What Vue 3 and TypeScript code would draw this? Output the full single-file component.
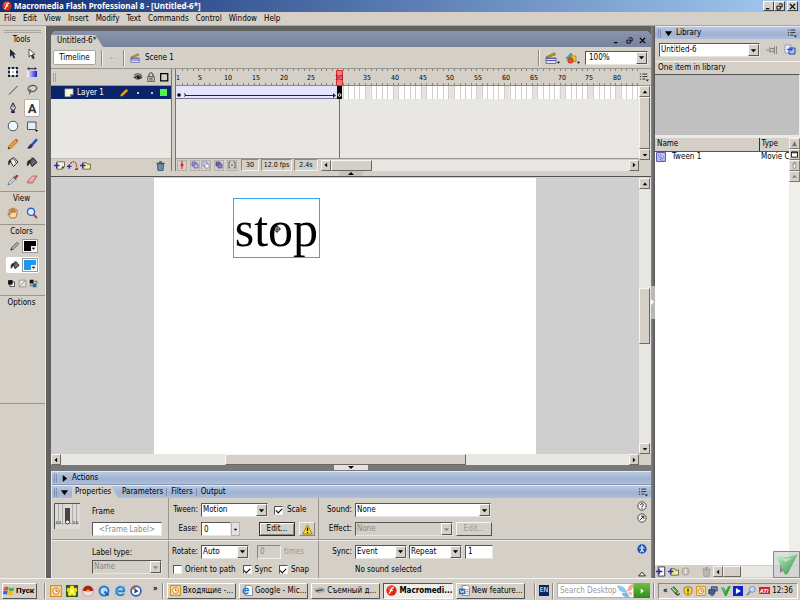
<script setup lang="ts">
import { ref } from 'vue'

const icons: Record<string, string> = {
  flash: '<circle cx="6" cy="6" r="5.6" fill="#e02810"/><circle cx="5" cy="4" r="3" fill="#f46a4a" opacity=".6"/><path d="M8.6 2.6C6 2.6 5.6 4.6 5 6.4S3.8 9.2 3 9.4M4.8 6.2h2.6" stroke="#fff" stroke-width="1.4" fill="none"/>',
  arrow: '<path d="M3 1v8l2-2 1.6 3.6 1.6-.8L6.6 6.4H9z" fill="#1c2c40"/>',
  subarrow: '<path d="M3 1v8l2-2 1.6 3.6 1.6-.8L6.6 6.4H9z" fill="#fff" stroke="#333" stroke-width=".8"/><path d="M6 7l1.8 3.6" stroke="#222" stroke-width="1.4"/>',
  transform: '<path d="M2 2h8v8H2z" fill="#fff" stroke="#345" stroke-width=".8"/><path d="M1 1h2v2H1zM5 1h2v2H5zM9 1h2v2H9zM1 5h2v2H1zM9 5h2v2H9zM1 9h2v2H1zM5 9h2v2H5zM9 9h2v2H9zM5.4 5.4h1.2v1.2H5.4z" fill="#123"/>',
  gradient: '<defs><linearGradient id="gr"><stop offset="0" stop-color="#fff"/><stop offset="1" stop-color="#1818d8"/></linearGradient></defs><path d="M1 5h10v6H1z" fill="url(#gr)"/><path d="M1 2.600L3.400.8v1.200h5.200V.8L11 2.600 8.600 4.400V3.200H3.400v1.200z" fill="#446"/>',
  line: '<path d="M2 10.500L10.500 2" stroke="#444" stroke-width="1"/>',
  lasso: '<path d="M3.400 7.200C1 6 1.400 2.400 5.400 1.600s6.600 1.600 4.800 4-5 2.600-6.400 1.400c-1-.9.6-1.800 1-.8.300 1-1.400 2-1.400 4" fill="none" stroke="#555" stroke-width="1.100"/>',
  pen: '<path d="M6 .8L3.600 5.600 4.800 8h2.400l1.200-2.400z" fill="#eef" stroke="#223" stroke-width="1"/><path d="M6 2v4" stroke="#223" stroke-width=".7"/><path d="M4.200 8.500h3.600V11H4.200z" fill="#224"/>',
  oval: '<circle cx="6" cy="6" r="4.800" fill="#eef8fa" stroke="#456" stroke-width="1"/>',
  rect: '<path d="M1.500 2h8.500v7.500H1.500z" fill="#e2f0f6" stroke="#456"/><path d="M9 10h3l-1.500 2z" fill="#000"/>',
  pencil: '<path d="M1 11l1-3.200L8.600 1.200l2.400 2.200L4 10z" fill="#f2a024" stroke="#84500a" stroke-width=".6"/><path d="M8.200 1.600l1-.8 2 2-.9.900z" fill="#d84830"/><path d="M1 11l.6-2L3 10.400z" fill="#222"/>',
  brush: '<path d="M5.200 6.200L10 .8l1.500 1.200-4.600 5.400z" fill="#2a54d4" stroke="#123488" stroke-width=".5"/><path d="M5.200 6C2.800 6 3.400 9 .8 10.200c3 1.200 6-.2 6-2.600z" fill="#335"/>',
  ink: '<path d="M2.500 4L7 1.500 11 6 6.500 10.500z" fill="#eee" stroke="#333"/><path d="M2.500 4C.8 5 .8 8 2 9.500 3 7 3 6 5 5z" fill="#222"/><path d="M5 2.800c2 .2 4 2 4 4.500" fill="none" stroke="#333" stroke-width=".8"/>',
  bucket: '<path d="M3.500 4.500L7.500 2 11 6.500 6 10.500z" fill="#667" stroke="#222"/><path d="M4 4C1.500 4.500.8 7 1.400 10 3 8.800 3 7 4.800 6zM6 1v4" fill="#222" stroke="#333" stroke-width=".8"/>',
  dropper: '<path d="M1 11l.8-2.600L6.600 3.600l1.800 1.800L3.400 10z" fill="#cfe4f2" stroke="#557" stroke-width=".7"/><path d="M6 3l3 3 .8-.8-.8-.8C11 3.400 12 2 10.800 1S8.400 1.400 7.600 3l-.8-.8z" fill="#b83440"/>',
  eraser: '<path d="M1 8l5.500-6h4.500L6.500 9H1.500z" fill="#f2b4b4" stroke="#955" stroke-width=".8"/><path d="M1.500 7.500H6L10.500 2" fill="none" stroke="#c77" stroke-width=".6"/>',
  hand: '<path d="M3.400 11L1 7.200c-.4-1 .8-1.200 1.400-.4L3.200 8 2 3.200c0-1 1.200-1 1.400-.2L4.400 6 4.200 1.800c0-1.100 1.300-1.100 1.400 0L6 5.600l.6-4c.2-1 1.400-.8 1.400.2l-.4 4L9 3.200c.5-.9 1.500-.4 1.300.4C9.600 6.400 10.400 8.500 8.400 11z" fill="#fbd8a0" stroke="#a05a14" stroke-width=".8"/>',
  zoom: '<path d="M7.500 7.500l3.500 3.500" stroke="#a44" stroke-width="2"/><circle cx="5" cy="4.800" r="3.600" fill="#d8f0ff" stroke="#2a5cd0" stroke-width="1.400"/>',
  bw: '<path d="M4 4h6v6H4z" fill="#fff" stroke="#222"/><path d="M1.500 1.500h6v6h-6z" fill="#111"/>',
  nocolor: '<path d="M1.500 1.500h9v9h-9z" fill="#e4e1dc" stroke="#888"/><path d="M2 10l8-8" stroke="#888"/>',
  swap: '<path d="M1 1h5v5H1z" fill="#111"/><path d="M5 6h5v5H5z" fill="#246c8c"/><path d="M7 3h3.500v3M5 9H1.500V7" fill="none" stroke="#246c8c" stroke-width="1.200"/>',
  strokepen: '<path d="M1 11l1-3.400L8.500 1.400l2 2L4 10z" fill="#aaa" stroke="#444" stroke-width=".8"/><path d="M1 11l.8-2.400 1.600 1.600z" fill="#222"/>',
  clap: '<path d="M1 6h10v5.500H1z" fill="#dcdcfa" stroke="#5858a8" stroke-width=".8"/><path d="M1 6.400h10M1 8.500h10" stroke="#5858a8"/><path d="M.8 5L9.500.8l1 2L2 5.800z" fill="#b8a418" stroke="#665a08" stroke-width=".6"/>',
  shapes: '<path d="M1 6.500L6 1l2 5z" fill="#38b8a0" stroke="#176" stroke-width=".6"/><path d="M6 4h5v5.500H6z" fill="#f0c824" stroke="#862" stroke-width=".6"/><circle cx="5.500" cy="8.500" r="2.800" fill="#e4502c" stroke="#922" stroke-width=".5"/>',
  back: '<path d="M1 6l4-3v2h5.500v2H5v2z" fill="#bcb8b0" stroke="#eee" stroke-width=".4"/>',
  eye: '<path d="M.6 6.500C3 3 8 2 11.400 6.500 8 10 3.500 9.500.6 6.500z" fill="#444"/><path d="M1 4C4 1.500 8 1.600 11 4.500" stroke="#222" fill="none"/><circle cx="6" cy="6.600" r="1.600" fill="#111"/><circle cx="4" cy="7" r=".8" fill="#bbb"/>',
  lock: '<path d="M3.500 6V3.500C3.500.2 8.500.2 8.500 3.500V6" fill="none" stroke="#333" stroke-width="1.200"/><path d="M2 5.500h8v6H2z" fill="#c8ccb0" stroke="#333" stroke-width=".8"/><path d="M4 7.500h4M4 9.500h4" stroke="#445"/>',
  outline: '<path d="M2 2h8.500v8.500H2z" fill="none" stroke="#000" stroke-width="1.500"/>',
  layer: '<path d="M1 1h10v6.500L8 10.500H1z" fill="#f8f8dc" stroke="#776" stroke-width=".7"/><path d="M11 7.500H7.500v3z" fill="#443"/>',
  addlayer: '<path d="M3 2h8.500v5L9 10H3z" fill="#f4f4d8" stroke="#443" stroke-width=".8"/><path d="M0 6h6M3 3v6" stroke="#2828b8" stroke-width="1.500"/><path d="M11.500 7H8.500v3z" fill="#333"/>',
  guide: '<path d="M4 4C5 1 9 1 10.500 5v4" fill="none" stroke="#e03030" stroke-width="1.500" stroke-dasharray="2 1"/><path d="M0 7h5M2.500 4.500v5" stroke="#2828b8" stroke-width="1.500"/><path d="M9 9h3v2H9z" fill="#c22"/>',
  folder: '<path d="M3 3h4l1 1.500h3.500V10H3z" fill="#f4ec9c" stroke="#443" stroke-width=".8"/><path d="M0 6h6M3 3v6" stroke="#2828b8" stroke-width="1.500"/>',
  trash: '<path d="M2.500 4h7L8.800 11.500H3.200z" fill="#6c88b4" stroke="#345" stroke-width=".8"/><path d="M1.500 3.500h9M4.500 2h3" stroke="#345" stroke-width="1.200"/>',
  trashoff: '<path d="M2.500 4h7L8.800 11.500H3.200z" fill="#bbb8b0" stroke="#999" stroke-width=".8"/><path d="M1.500 3.500h9M4.500 2h3" stroke="#999" stroke-width="1.200"/>',
  center: '<path d="M6 0v12" stroke="#e02020" stroke-width="1.600"/><path d="M4 6h4" stroke="#e02020" stroke-width="4"/>',
  onion: '<path d="M1.500 1.500h6v6h-6z" fill="#9898d8" stroke="#5050a0"/><path d="M4.500 4.500h6v6h-6z" fill="#b8b8ec" stroke="#5050a0"/>',
  onion2: '<path d="M1.500 1.500h6v6h-6z" fill="#e4e4fc" stroke="#6868b0"/><path d="M4.500 4.500h6v6h-6z" fill="#fff" stroke="#6868b0"/>',
  multi: '<path d="M1.500 1.500h6v6h-6z" fill="#6868b8" stroke="#404090"/><path d="M4.500 4.500h6v6h-6z" fill="#8888d0" stroke="#404090"/>',
  markers: '<path d="M4 1.500H1.500v9H4M8 1.500h2.500v9H8" fill="none" stroke="#333"/><path d="M5 5h2v2H5z" fill="#558"/>',
  menu: '<path d="M1 2.500h1.500M1 5.500h1.500M1 8.500h1.500M4 2.500h6M4 5.500h6M4 8.500h3.500" stroke="#333" stroke-width="1.200"/><path d="M8 9h4l-2 2.500z" fill="#222"/>',
  pin: '<path d="M0 6h4M4 3v6M4 4.500h4v3H4M8.500 2v8M10.500 2v8" fill="none" stroke="#888" stroke-width="1"/>',
  newlib: '<path d="M1 1h6v8H1z" fill="#e8eefc" stroke="#7890c8" stroke-width=".8"/><path d="M5 4h6v6H5z" fill="#a8c0f4" stroke="#2848b0"/><path d="M3 5.500h5M6.500 4l2 1.500-2 1.500" stroke="#2050d0" fill="none"/>',
  clip: '<path d="M.7.700h10.600v10.600H.7z" fill="#c8c8fa" stroke="#5050b0" stroke-width="1.200"/><path d="M3 3h2v2H3zM6.500 4.500h2.500V7H6.500zM3.500 6.500h2v2.500h-2zM6 8h2v2H6z" fill="#fff" stroke="#5050b0" stroke-width=".6"/>',
  help: '<circle cx="6" cy="6" r="5" fill="#f4f2ee" stroke="#333"/><path d="M4.300 4.800C4.300 2.600 7.800 2.800 7.600 4.800 7.400 5.800 6 5.800 6 7.200M6 8.200v1.200" fill="none" stroke="#222" stroke-width="1.200"/>',
  out: '<circle cx="6" cy="6" r="5" fill="#f4f2ee" stroke="#333"/><path d="M3.800 8.200L8 4M5 3.800h3.200V7" fill="none" stroke="#222" stroke-width="1.200"/>',
  access: '<circle cx="6" cy="6" r="5.600" fill="#1c50b8"/><circle cx="6" cy="3" r="1.100" fill="#fff"/><path d="M2.800 4.800h6.400M6 4.800v2.500M6 6.500L4 9.800M6 6.500l2 3.300" stroke="#fff" stroke-width="1.300"/>',
  warn: '<path d="M6 1l5.300 10H.7z" fill="#fcd818" stroke="#8a6400" stroke-width=".8"/><path d="M6 4.200v3.400M6 8.600V10" stroke="#111" stroke-width="1.300"/>',
  newsym: '<path d="M2.500 1h7v10h-7z" fill="#fff" stroke="#334"/><path d="M0 6h7M3.500 3v6" stroke="#2828b8" stroke-width="1.500"/>',
  info: '<circle cx="6" cy="6" r="4" fill="#c4c1ba" stroke="#a4a19a"/><path d="M6 3.500v5" stroke="#eee" stroke-width="1.500"/>',
  windows: '<path d="M1 2.500Q3.500.8 5.600 2.200L4.800 5.600Q3 4.400.4 5.600z" fill="#e4542c"/><path d="M6.200 2.400Q8.500 3.800 11.200 2.600l-.8 3.400Q8 7 5.600 5.800z" fill="#58b030"/><path d="M.3 6.200Q3 5 4.700 6.200L4 9.600Q2 8.400 0 9.400z" fill="#3468d8"/><path d="M5.400 6.400Q8 7.600 10.200 6.600L9.400 10Q7 11 4.700 9.800z" fill="#f4bc20"/>',
  outlook: '<path d="M.7.700h10.600v10.600H.7z" fill="#fce4a8" stroke="#d88c20" stroke-width="1.200"/><circle cx="6" cy="6" r="3.300" fill="#fff8e4" stroke="#c87818"/><path d="M6 4v2.200h1.800" stroke="#a45c10" fill="none"/>',
  icq: '<path d="M0 0h12v12H0z" fill="#2c5c24"/><circle cx="6" cy="2.800" r="2.200" fill="#f8e820"/><circle cx="2.900" cy="5" r="2.200" fill="#f4d818"/><circle cx="9.100" cy="5" r="2.200" fill="#f4d818"/><circle cx="4" cy="8.800" r="2.200" fill="#f8e820"/><circle cx="8" cy="8.800" r="2.200" fill="#f8e820"/><circle cx="6" cy="6" r="2" fill="#fff8a0"/>',
  redball: '<circle cx="6" cy="6" r="5.400" fill="#f2dcd4" stroke="#a88" stroke-width=".6"/><path d="M.8 6a5.200 5.200 0 0110.400 0z" fill="#a82020"/><path d="M3 7h6L6 4z" fill="#e8b820"/>',
  qt: '<circle cx="6" cy="6" r="4.500" fill="#b8dcf8" stroke="#2c78c8" stroke-width="2"/><path d="M6.500 6.500l4 4" stroke="#1c58a8" stroke-width="1.800"/>',
  ie: '<path d="M10 8.500A4.300 4.300 0 116 1.700c2.800 0 4.400 2 4.200 4.600H3.500" fill="none" stroke="#2484d8" stroke-width="2"/><path d="M1 10.500C-.5 8 7 1 11 1.500" fill="none" stroke="#68b4ec"/>',
  wmp: '<circle cx="6" cy="6" r="4.900" fill="#fff" stroke="#2858c0" stroke-width="1.600"/><path d="M6 1.100A4.900 4.900 0 011.500 4" stroke="#d86820" stroke-width="1.600" fill="none"/><path d="M4.500 3.500L8.500 6l-4 2.500z" fill="#1c3c94"/>',
  doc: '<path d="M3.500.5h6l2 2v9h-8z" fill="#fff" stroke="#557" stroke-width=".7"/><path d="M0 4h7v6H0z" fill="#2c64c4"/><path d="M1.500 5.500l1 3 1-2 1 2 1-3" stroke="#fff" fill="none" stroke-width=".8"/><path d="M8 5h2.500M8 7h2.500M8 9h2.500" stroke="#88a"/>',
  iedoc: '<path d="M3.500.5h6l2 2v9h-8z" fill="#fff" stroke="#557" stroke-width=".7"/><path d="M7 8A3 3 0 114.500 3.500C6.500 3.500 7.200 5 7 6.200H2.500" fill="none" stroke="#2474d0" stroke-width="1.500"/>',
  disk: '<path d="M0 4.500L7 3l5 1.500-1 2.500-7 1.500z" fill="#bbb" stroke="#888" stroke-width=".5"/><path d="M2 6.500l8-1.500" stroke="#444" stroke-width="1.500"/>',
  usb: '<path d="M1 3l4-2 5 6-3 3z" fill="#58a848" stroke="#245c1c" stroke-width=".8"/><path d="M6 8l3 3 3-2" stroke="#444" fill="none" stroke-width="1.500"/><path d="M2 2l5 5" stroke="#e8f4e0"/>',
  shield: '<path d="M6 .6l4.800 1.400v4C10.800 9 8 11 6 11.600 4 11 1.200 9 1.200 6V2z" fill="#fcd428" stroke="#7a6a38" stroke-width=".9"/><path d="M6 3v4M6 8.200v1.500" stroke="#222" stroke-width="1.500"/>',
  net: '<path d="M4 1h7v5H4z" fill="#6888d0" stroke="#334"/><path d="M1 4.500h7v5H1z" fill="#4860a8" stroke="#334"/><path d="M3 11h4" stroke="#445" stroke-width="1.500"/>',
  vee: '<path d="M0 1.500l3.500.5L6 6 8.500.5 12 0 6.500 12H5z" fill="#28a03c"/><path d="M2 2.500L5.500 8" stroke="#80dc80"/>',
  play: '<path d="M0 0h12v12H0z" fill="#0c24d0"/><path d="M3.500 2.500L9.500 6l-6 3.500z" fill="#fff"/>',
  search: '<circle cx="7.500" cy="4" r="3.500" fill="#c0dcf8" stroke="#6888c0"/><path d="M5 6.800L1 11" stroke="#7888a8" stroke-width="2"/>',
  butterfly: '<path d="M0 2c3-.5 6 1 7.500 4.500C5 8 1 6 0 2z" fill="#8cc8ec"/><path d="M7.500 6.500C8 3 10 .5 12 1c.5 3-1 5-4.500 5.500z" fill="#f8a888"/><path d="M3.500 7.500L7.500 7l2 3.500C7 11.500 4 10 3.500 7.500z" fill="#78b8e4"/><path d="M8 7l3.500-.2-1 3.200z" fill="#f4b49c"/>',
}

interface Tool { id: string; label: string }
const tools: Tool[] = [
  { id: 'arrow', label: 'Selection' }, { id: 'subarrow', label: 'Subselection' },
  { id: 'transform', label: 'Free transform' }, { id: 'gradient', label: 'Gradient transform' },
  { id: 'line', label: 'Line' }, { id: 'lasso', label: 'Lasso' },
  { id: 'pen', label: 'Pen' }, { id: 'text', label: 'Text' },
  { id: 'oval', label: 'Oval' }, { id: 'rect', label: 'Rectangle' },
  { id: 'pencil', label: 'Pencil' }, { id: 'brush', label: 'Brush' },
  { id: 'ink', label: 'Ink bottle' }, { id: 'bucket', label: 'Paint bucket' },
  { id: 'dropper', label: 'Eyedropper' }, { id: 'eraser', label: 'Eraser' },
]
const activeTool = ref('text')
const menus = ['File', 'Edit', 'View', 'Insert', 'Modify', 'Text', 'Commands', 'Control', 'Window', 'Help']

const FRAME = 5.56
const ROW_FRAMES = 120
const lastKey = 30
const fx = (n: number) => (n - 1) * FRAME
const keyX = Math.floor(fx(lastKey))
const labels = [1, ...Array.from({ length: 16 }, (_, i) => (i + 1) * 5)]

const onionButtons = ['center', 'onion', 'onion2', 'multi', 'markers']
const quick = ['outlook', 'icq', 'redball', 'qt', 'ie', 'wmp']
const tasks = [
  { icon: 'outlook', text: 'Входящие -...', active: false },
  { icon: 'iedoc', text: 'Google - Mic...', active: false },
  { icon: 'disk', text: 'Съемный д...', active: false },
  { icon: 'flash', text: 'Macromedi...', active: true },
  { icon: 'doc', text: 'New feature...', active: false },
]
const tray = ['usb', 'shield', 'outlook', 'net', 'vee', 'play', 'search']

const scale = ref(true)
const orient = ref(false)
const syncOn = ref(true)
const snap = ref(true)
const ease = ref('0')
const loops = ref('1')
</script>

<template>
  <div class="screen">
    <header class="titlebar">
      <svg class="ic" viewBox="0 0 12 12" v-html="icons.flash" />
      <h1>Macromedia Flash Professional 8 - [Untitled-6*]</h1>
      <div class="winbtns">
        <button aria-label="Minimize"><svg viewBox="0 0 8 8"><path d="M1 6.500h4" stroke="#000" stroke-width="1.500" /></svg></button>
        <button aria-label="Restore"><svg viewBox="0 0 8 8"><path d="M3 1h4v3.500H5M1 3.500h4V7H1z" fill="none" stroke="#000" /></svg></button>
        <button class="gapped" aria-label="Close"><svg viewBox="0 0 8 8"><path d="M1 1l6 6M7 1L1 7" stroke="#000" stroke-width="1.500" /></svg></button>
      </div>
    </header>
    <nav class="menubar"><button v-for="m in menus" :key="m">{{ m }}</button></nav>

    <main class="work">
      <aside class="tools">
        <div class="grip" />
        <h2>Tools</h2>
        <div class="toolgrid">
          <button v-for="t in tools" :key="t.id" :aria-label="t.label" :class="{ on: activeTool === t.id }" @click="activeTool = t.id">
            <b v-if="t.id === 'text'">A</b>
            <svg v-else class="ic12" viewBox="0 0 12 12" v-html="icons[t.id]" />
          </button>
        </div>
        <h2 class="ruled">View</h2>
        <div class="toolgrid">
          <button aria-label="Hand"><svg class="ic12" viewBox="0 0 12 12" v-html="icons.hand" /></button>
          <button aria-label="Zoom"><svg class="ic12" viewBox="0 0 12 12" v-html="icons.zoom" /></button>
        </div>
        <h2 class="ruled">Colors</h2>
        <div class="colorrow">
          <svg class="ic" viewBox="0 0 12 12" v-html="icons.strokepen" />
          <button class="swatch black" aria-label="Stroke color"><svg viewBox="0 0 6 6"><path d="M0 0h6v6H0z" fill="#eee" /><path d="M1 2h4L3 4.500z" /></svg></button>
        </div>
        <div class="colorrow lit">
          <svg class="ic" viewBox="0 0 12 12" v-html="icons.bucket" />
          <button class="swatch blue" aria-label="Fill color"><svg viewBox="0 0 6 6"><path d="M0 0h6v6H0z" fill="#eee" /><path d="M1 2h4L3 4.500z" /></svg></button>
        </div>
        <div class="mini">
          <button aria-label="Black and white"><svg viewBox="0 0 12 12" v-html="icons.bw" /></button>
          <button aria-label="No color"><svg viewBox="0 0 12 12" v-html="icons.nocolor" /></button>
          <button aria-label="Swap colors"><svg viewBox="0 0 12 12" v-html="icons.swap" /></button>
        </div>
        <h2 class="ruled">Options</h2>
        <div class="options" />
      </aside>

      <section class="center">
        <div class="doc">
          <div class="doctabs">
            <span class="doctab">Untitled-6*</span>
            <div class="docbtns">
              <button aria-label="Minimize document"><svg viewBox="0 0 8 8"><path d="M1 6.500h4" stroke="#000" stroke-width="1.500" /></svg></button>
              <button aria-label="Restore document"><svg viewBox="0 0 8 8"><path d="M3 1h4v3.500H5M1 3.500h4V7H1z" fill="none" stroke="#000" /></svg></button>
              <button aria-label="Close document"><svg viewBox="0 0 8 8"><path d="M1 1l6 6M7 1L1 7" stroke="#000" stroke-width="1.500" /></svg></button>
            </div>
          </div>
          <div class="editbar">
            <button class="tlbtn">Timeline</button>
            <i class="sep" />
            <svg class="ic" viewBox="0 0 12 12" v-html="icons.back" />
            <i class="sep" />
            <svg class="ic" viewBox="0 0 12 12" v-html="icons.clap" />
            <span>Scene 1</span>
            <i class="sep right" />
            <button class="flat" aria-label="Edit scene"><svg class="ic12" viewBox="0 0 12 12" v-html="icons.clap" /><svg class="nib" viewBox="0 0 4 4"><path d="M0 1h4L2 3.500z" /></svg></button>
            <button class="flat" aria-label="Edit symbols"><svg class="ic12" viewBox="0 0 12 12" v-html="icons.shapes" /><svg class="nib" viewBox="0 0 4 4"><path d="M0 1h4L2 3.500z" /></svg></button>
            <span class="sel zoomsel"><select aria-label="Zoom level"><option>100%</option></select><i><svg viewBox="0 0 8 8"><path d="M1 2.500h6L4 6z" /></svg></i></span>
          </div>

          <div class="timeline">
            <div class="layers">
              <div class="lhead"><i class="vgrip" /><svg class="ic" viewBox="0 0 12 12" v-html="icons.eye" /><svg class="ic" viewBox="0 0 12 12" v-html="icons.lock" /><svg class="ic" viewBox="0 0 12 12" v-html="icons.outline" /></div>
              <div class="layer"><svg class="ic" viewBox="0 0 12 12" v-html="icons.layer" /><span>Layer 1</span><svg class="ic" viewBox="0 0 12 12" v-html="icons.pencil" /><i class="dot" /><i class="dot" /><i class="green" /></div>
              <div class="lbody" />
              <div class="lfoot">
                <button aria-label="Insert layer"><svg viewBox="0 0 12 12" v-html="icons.addlayer" /></button>
                <button aria-label="Add motion guide"><svg viewBox="0 0 12 12" v-html="icons.guide" /></button>
                <button aria-label="Insert folder"><svg viewBox="0 0 12 12" v-html="icons.folder" /></button>
                <button class="push" aria-label="Delete layer"><svg viewBox="0 0 12 12" v-html="icons.trash" /></button>
              </div>
            </div>
            <div class="frames">
              <div class="framesmain">
                <svg class="ruler" height="89" width="100%">
                  <rect width="100%" height="17" fill="#d4d0c8" />
                  <path v-for="n in ROW_FRAMES" :key="'t' + n" :d="`M${Math.round(fx(n + 1))}.500 0v2m0 12v3`" stroke="#8a867e" />
                  <rect y="16" width="100%" height="1" fill="#8a867e" />
                  <rect y="17" width="100%" height="13" fill="#fff" />
                  <rect v-for="n in 24" :key="'g' + n" :x="fx(n * 5)" y="17" :width="FRAME" height="13" fill="#e6e3de" />
                  <path v-for="n in ROW_FRAMES" :key="'f' + n" :d="`M${Math.round(fx(n + 1))}.500 17v13`" stroke="#d2cfc9" />
                  <rect y="17" :width="keyX" height="12" fill="#e4e4ff" />
                  <rect y="29" :width="keyX + 5" height="1" fill="#77749a" />
                  <circle cx="3" cy="26" r="1.800" />
                  <path d="M8 24.500l2 1.500-2 1.500M10 26.500h148" stroke="#223" fill="none" stroke-width="1" />
                  <path d="M157 24l3 2.500-3 2.500z" fill="#223" />
                  <rect :x="keyX + 2" y="30" width="1" height="59" fill="#e83c3c" />
                  <rect :x="keyX" y="17" width="5" height="13" fill="#000" />
                  <circle :cx="keyX + 2.5" cy="26" r="1.400" fill="none" stroke="#fff" />
                  <path :d="`M${keyX - 1}.500 1.500h6v15h-6z`" fill="#f47878" stroke="#d82828" />
                  <text v-for="l in labels" :key="'l' + l" :x="Math.round(fx(l)) + 2" y="11" text-anchor="middle" :class="{ cur: l === lastKey }">{{ l }}</text>
                </svg>
                <div class="status">
                  <button v-for="b in onionButtons" :key="b" :class="'st-' + b" :aria-label="b"><svg viewBox="0 0 12 12" v-html="icons[b]" /></button>
                  <output class="n">30</output><output class="fps">12.0 fps</output><output class="sec">2.4s</output>
                  <div class="hscroll"><button aria-label="Scroll frames left"><svg viewBox="0 0 8 8"><path d="M5.500 1v6L2 4z" /></svg></button><i class="thumb short" /><button class="push" aria-label="Scroll frames right"><svg viewBox="0 0 8 8"><path d="M2.500 1v6L6 4z" /></svg></button></div>
                </div>
              </div>
              <div class="tlside">
                <button class="flat" aria-label="Frame view"><svg class="ic" viewBox="0 0 12 12" v-html="icons.menu" /></button>
                <div class="vscroll"><button aria-label="Scroll layers up"><svg viewBox="0 0 8 8"><path d="M1 5.500h6L4 2z" /></svg></button><i class="thumb grow" /><button aria-label="Scroll layers down"><svg viewBox="0 0 8 8"><path d="M1 2.500h6L4 6z" /></svg></button></div>
                <div class="corner" />
              </div>
            </div>
          </div>
          <div class="grab"><svg viewBox="0 0 24 5"><path d="M0 0h24v5H0z" fill="#c4c1ba" /><path d="M9 4h6l-3-3z" /></svg></div>

          <div class="stagewrap">
            <div class="stageview">
              <div class="stage">
                <div class="textobj">stop<svg viewBox="0 0 8 8"><circle cx="4" cy="4" r="2.500" fill="none" stroke="#000" stroke-width=".8" /><path d="M4 0v8M0 4h8" stroke="#000" stroke-width=".8" /></svg></div>
              </div>
            </div>
            <div class="vscroll"><button aria-label="Scroll up"><svg viewBox="0 0 8 8"><path d="M1 5.500h6L4 2z" /></svg></button><i class="space" /><i class="thumb mid" /><i class="space" /><button aria-label="Scroll down"><svg viewBox="0 0 8 8"><path d="M1 2.500h6L4 6z" /></svg></button></div>
            <div class="hscroll"><button aria-label="Scroll left"><svg viewBox="0 0 8 8"><path d="M5.500 1v6L2 4z" /></svg></button><i class="space" /><i class="thumb wide" /><i class="space" /><button aria-label="Scroll right"><svg viewBox="0 0 8 8"><path d="M2.500 1v6L6 4z" /></svg></button></div>
            <div class="corner" />
          </div>
        </div>
        <div class="split"><svg viewBox="0 0 34 5"><path d="M0 0h34v5H0z" fill="#e4e2de" /><path d="M14 1h6l-3 3z" /></svg></div>

        <div class="panel">
          <div class="phead"><i class="vgrip" /><svg class="tri" viewBox="0 0 8 8"><path d="M2 0v8l5-4z" /></svg><span>Actions</span></div>
          <div class="phead tabs"><i class="vgrip" /><svg class="tri" viewBox="0 0 8 8"><path d="M0 1.500h8L4 7z" /></svg><button class="cur">Properties</button><button>Parameters</button><button>Filters</button><button>Output</button><svg class="ic menuic" viewBox="0 0 12 12" v-html="icons.menu" /></div>
          <form class="props" @submit.prevent>
            <div class="cell c1 top">
              <svg class="thumbimg" viewBox="0 0 26 26"><path d="M0 0h26v26H0z" fill="#dedbd6" /><path d="M.5 26V.5H26" fill="none" stroke="#555" /><path d="M4.500 1v21M8.500 1v21M18.500 1v21M22.500 1v21M1 20.500h24" stroke="#aaa" /><path d="M11 5h5v13h-5z" fill="#444" /><circle cx="13.500" cy="19" r="2" fill="#fff" stroke="#333" /><path d="M3 18v3M6 18v3M20 18v3M23 18v3" stroke="#555" /></svg>
              <div class="stack"><label for="fl">Frame</label><input id="fl" class="fld" placeholder="<Frame Label>"></div>
            </div>
            <div class="cell c2 top">
              <div class="row"><label class="lb" for="tw">Tween:</label><span class="sel w67"><select id="tw"><option>Motion</option></select><i><svg viewBox="0 0 8 8"><path d="M1 2.500h6L4 6z" /></svg></i></span><label class="ck sc"><input v-model="scale" type="checkbox">Scale</label></div>
              <div class="row"><label class="lb" for="ea">Ease:</label><input id="ea" v-model="ease" class="fld w30"><button class="pop" aria-label="Ease slider"><svg viewBox="0 0 8 8"><path d="M2 3h4L4 5.500z" /></svg></button><button class="btn edit">Edit...</button><button class="warn" aria-label="Tween warning"><svg viewBox="0 0 12 12" v-html="icons.warn" /></button></div>
            </div>
            <div class="cell c3 top">
              <div class="row"><label class="lb" for="so">Sound:</label><span class="sel w136"><select id="so"><option>None</option></select><i><svg viewBox="0 0 8 8"><path d="M1 2.500h6L4 6z" /></svg></i></span></div>
              <div class="row"><label class="lb" for="ef">Effect:</label><span class="sel off w98"><select id="ef" disabled><option>None</option></select><i><svg viewBox="0 0 8 8"><path d="M1 2.500h6L4 6z" fill="#888" /></svg></i></span><button class="btn off" disabled>Edit...</button></div>
            </div>
            <div class="cell c4 top"><button aria-label="Help"><svg viewBox="0 0 12 12" v-html="icons.help" /></button><button aria-label="Open script"><svg viewBox="0 0 12 12" v-html="icons.out" /></button></div>
            <div class="cell c1 low"><div class="stack"><label for="lt">Label type:</label><span class="sel off"><select id="lt" disabled><option>Name</option></select><i><svg viewBox="0 0 8 8"><path d="M1 2.500h6L4 6z" fill="#888" /></svg></i></span></div></div>
            <div class="cell c2 low">
              <div class="row"><label class="lb" for="ro">Rotate:</label><span class="sel w48"><select id="ro"><option>Auto</option></select><i><svg viewBox="0 0 8 8"><path d="M1 2.500h6L4 6z" /></svg></i></span><input id="ti" class="fld off times" value="0" disabled><label class="dim" for="ti">times</label></div>
              <div class="row checks"><label class="ck"><input v-model="orient" type="checkbox">Orient to path</label><label class="ck"><input v-model="syncOn" type="checkbox">Sync</label><label class="ck"><input v-model="snap" type="checkbox">Snap</label></div>
            </div>
            <div class="cell c3 low">
              <div class="row"><label class="lb" for="sy">Sync:</label><span class="sel w51"><select id="sy"><option>Event</option></select><i><svg viewBox="0 0 8 8"><path d="M1 2.500h6L4 6z" /></svg></i></span><span class="sel w53"><select aria-label="Repeat or loop"><option>Repeat</option></select><i><svg viewBox="0 0 8 8"><path d="M1 2.500h6L4 6z" /></svg></i></span><input v-model="loops" class="fld w28" aria-label="Repeat count"></div>
              <div class="row"><span class="lb" /><span>No sound selected</span></div>
            </div>
            <div class="cell c4 low"><button aria-label="Accessibility"><svg viewBox="0 0 12 12" v-html="icons.access" /></button><button class="end" aria-label="Collapse"><svg viewBox="0 0 12 12"><path d="M2 9.500h8L6 5z" fill="#fff" stroke="#000" /></svg></button></div>
          </form>
        </div>
      </section>

      <div class="gutter"><button aria-label="Collapse panels"><svg viewBox="0 0 4 8"><path d="M0 1v6l3-3z" fill="#fff" /></svg></button></div>

      <aside class="library">
        <div class="phead"><i class="vgrip" /><svg class="tri" viewBox="0 0 8 8"><path d="M0 1.500h8L4 7z" /></svg><span>Library</span><svg class="ic menuic" viewBox="0 0 12 12" v-html="icons.menu" /></div>
        <div class="librow">
          <span class="sel"><select aria-label="Library document"><option>Untitled-6</option></select><i><svg viewBox="0 0 8 8"><path d="M1 2.500h6L4 6z" /></svg></i></span>
          <button aria-label="Pin library"><svg viewBox="0 0 12 12" v-html="icons.pin" /></button>
          <button aria-label="New library panel"><svg viewBox="0 0 12 12" v-html="icons.newlib" /></button>
        </div>
        <p class="count">One item in library</p>
        <div class="preview" />
        <div class="list">
          <div class="tablewrap">
            <table>
              <thead><tr><th class="nm">Name</th><th>Type</th></tr></thead>
              <tbody><tr><td><svg class="ic" viewBox="0 0 12 12" v-html="icons.clip" /><span>Tween 1</span></td><td>Movie C</td></tr></tbody>
            </table>
          </div>
          <div class="lside">
            <button aria-label="Sort order"><svg viewBox="0 0 8 8"><path d="M1 7h6L4 1z" fill="#777" /></svg></button>
            <button aria-label="Wide view"><svg viewBox="0 0 8 8"><path d="M.5 1h7v6h-7zM.5 2h7" fill="#fff" stroke="#000" /></svg></button>
            <button aria-label="Narrow view"><svg viewBox="0 0 8 8"><path d="M2.500 1h3v6h-3zM2.500 2h3" fill="#fff" stroke="#888" /></svg></button>
            <button aria-label="Scroll list up"><svg viewBox="0 0 8 8"><path d="M1 5.500h6L4 2z" fill="#888" /></svg></button>
            <i class="track" />
          </div>
        </div>
        <div class="libfoot">
          <button aria-label="New symbol"><svg viewBox="0 0 12 12" v-html="icons.newsym" /></button>
          <button aria-label="New folder"><svg viewBox="0 0 12 12" v-html="icons.folder" /></button>
          <button aria-label="Item properties"><svg viewBox="0 0 12 12" v-html="icons.info" /></button>
          <button class="del" aria-label="Delete item"><svg viewBox="0 0 12 12" v-html="icons.trashoff" /></button>
          <div class="hscroll"><button aria-label="Scroll list left"><svg viewBox="0 0 8 8"><path d="M5.500 1v6L2 4z" /></svg></button><i class="thumb tiny" /></div>
          <svg class="badge" viewBox="0 0 27 27"><defs><linearGradient id="bg" x1="0" y1="0" x2="1" y2="1"><stop offset="0" stop-color="#d8f4dc" /><stop offset=".5" stop-color="#78c088" /><stop offset="1" stop-color="#388c4c" /></linearGradient></defs><path d="M.5.500h26v26H.5z" fill="#c8c8c8" fill-opacity=".6" stroke="#888" /><path d="M7 18v-4l5 4-5 4z" fill="#333" opacity=".5" /><path d="M2 4c4 1 7 2 10 2 4 0 9-1 13-3L15 22c-1 2-3 2-4 0z" fill="url(#bg)" /><path d="M5 6c4 2 11 2 16 0l-8 5z" fill="#c8f0cc" opacity=".7" /></svg>
        </div>
      </aside>
    </main>

    <footer class="taskbar">
      <button class="start"><svg class="ic12" viewBox="0 0 12 12" v-html="icons.windows" />Пуск</button>
      <i class="sep" />
      <div class="quick"><button v-for="q in quick" :key="q" :aria-label="q"><svg viewBox="0 0 12 12" v-html="icons[q]" /></button></div>
      <span class="chev">»</span>
      <i class="sep" />
      <div class="tasks"><button v-for="t in tasks" :key="t.text" :class="{ active: t.active }"><svg class="ic" viewBox="0 0 12 12" v-html="icons[t.icon]" /><span>{{ t.text }}</span></button></div>
      <i class="sep" />
      <span class="lang">EN</span>
      <i class="sep" />
      <div class="find"><input placeholder="Search Desktop" aria-label="Search Desktop"><svg viewBox="0 0 12 12" v-html="icons.butterfly" /></div>
      <button class="go" aria-label="Search"><svg viewBox="0 0 8 8"><path d="M3 2v4l2.500-2z" fill="#fff" /></svg></button>
      <i class="sep" />
      <div class="tray"><span class="chev">«</span><svg v-for="(t, i) in tray" :key="i" class="ic" viewBox="0 0 12 12" v-html="icons[t]" /><b class="ati">ATI</b><time>12:36</time></div>
    </footer>
  </div>
</template>

<style>
body { margin: 0; }
</style>

<style scoped>
* { box-sizing: border-box; }
.screen { --face: #d4d0c8; min-height: 100vh; display: flex; flex-direction: column; background: #606060; color: #000; font: 8px/10px "DejaVu Sans Condensed", "DejaVu Sans", sans-serif; }
button, input, select { font: inherit; color: inherit; padding: 0; margin: 0; border: 0; background: none; border-radius: 0; }
svg { display: block; flex: none; }
i { display: block; flex: none; }
h1, h2, p { margin: 0; font-weight: 400; font-size: 8px; }
.ic { width: 10px; height: 10px; flex: none; }
.ic12 { width: 12px; height: 12px; flex: none; }

.titlebar { height: 12px; display: flex; align-items: center; gap: 2px; padding: 0 2px; background: linear-gradient(90deg, #0f2c74, #a6caf0); color: #fff; }
.titlebar h1 { flex: 1; font: 700 8px/12px "Noto Sans", sans-serif; }
.winbtns { display: flex; }
.winbtns button { width: 11px; height: 10px; display: grid; place-items: center; background: var(--face); border: 1px solid; border-color: #fff #404040 #404040 #fff; }
.winbtns .gapped { margin-left: 2px; }
.winbtns svg, .docbtns svg { width: 7px; height: 7px; }
.menubar { height: 14px; display: flex; align-items: center; gap: 7px; padding: 0 4px; background: var(--face); border-bottom: 1px solid #a8a49c; }

.work { flex: 1; display: flex; background: #626262; }
.tools { width: 46px; margin-right: 5px; background: var(--face); border-right: 1px solid #eceae6; display: flex; flex-direction: column; align-items: stretch; }
.grip { height: 3px; margin: 4px 4px 2px; border: solid #aaa69e; border-width: 1px 0; }
.tools h2 { text-align: center; line-height: 10px; padding-right: 2px; }
.tools h2.ruled { border-top: 1px solid #9a968e; padding-top: 2px; }
.toolgrid { display: grid; grid-template-columns: 16px 16px; column-gap: 3px; margin: 0 5px 2px; grid-auto-rows: 18px; }
.toolgrid button { display: grid; place-items: center; }
.toolgrid .on { background: #fff; border: 1px solid #b4b0a8; border-radius: 2px; }
.toolgrid b { font: 700 13px/15px Roboto, sans-serif; color: #333; }
.colorrow { height: 18px; margin: 0 6px; padding: 0 2px 0 4px; display: flex; align-items: center; justify-content: space-between; }
.colorrow.lit { background: #fff; border-radius: 2px; height: 16px; margin: 2px 6px 0; }
.swatch { width: 14px; height: 12px; border: 1px solid #fff; outline: 1px solid #999; display: flex; align-items: flex-end; justify-content: flex-end; }
.swatch svg { width: 5px; height: 5px; }
.black { background: #000; }
.blue { background: #1c98f4; }
.mini { display: flex; gap: 2px; padding: 6px 7px 7px; }
.mini svg { width: 9px; height: 9px; }
.options { height: 96px; border-bottom: 1px solid #9a968e; }

.center { flex: 1; min-width: 0; display: flex; flex-direction: column; padding-top: 5px; }
.doc { flex: 1; display: flex; flex-direction: column; background: var(--face); border-radius: 6px 6px 0 0; overflow: hidden; }
.doctabs { height: 16px; background: linear-gradient(#8a94ac, #76829c); display: flex; align-items: flex-end; justify-content: space-between; padding-right: 5px; }
.doctab { height: 12px; width: 52px; padding: 1px 6px; background: var(--face); clip-path: polygon(0 0, 85% 0, 100% 100%, 0 100%); white-space: nowrap; }
.docbtns { display: flex; gap: 6px; height: 14px; align-items: center; }
.editbar { height: 22px; display: flex; align-items: center; gap: 5px; padding: 0 3px 0 2px; border-bottom: 1px solid #9a968e; }
.tlbtn { width: 43px; height: 15px; background: #fff; border: 1px solid #aaa69e; border-radius: 2px; }
.sep { width: 2px; height: 16px; border-left: 1px solid #8e8a82; border-right: 1px solid #f4f2ee; }
.editbar .sep.right { margin-left: auto; }
.flat { display: flex; align-items: flex-end; }
.nib { width: 3px; height: 3px; }
.sel { display: grid; grid-template-columns: 1fr 11px; height: 14px; background: #fff; border: 1px solid; border-color: #555 #e8e6e2 #e8e6e2 #555; }
.sel select { grid-area: 1 / 1 / 2 / 3; appearance: none; width: 100%; min-width: 0; padding-left: 1px; line-height: 12px; outline: 0; opacity: 1; }
.sel i { grid-area: 1 / 2; pointer-events: none; background: var(--face); border: 1px solid; border-color: #fff #555 #555 #fff; display: grid; place-items: center; }
.sel i svg { width: 7px; height: 7px; }
.sel.off { background: var(--face); color: #8a867e; }
.zoomsel { width: 63px; }
.zoomsel select { padding-left: 3px; }

.timeline { display: flex; height: 102px; }
.layers { width: 121px; margin-right: 3px; border-right: 1px solid #77736b; display: flex; flex-direction: column; }
.lhead { height: 17px; display: flex; align-items: center; gap: 3px; padding: 0 2px; border-bottom: 1px solid #9a968e; }
.vgrip { width: 3px; height: 9px; border: solid #a8a49c; border-width: 0 1px; }
.lhead .vgrip { margin-right: auto; }
.layer { height: 13px; background: #0a246a; color: #fff; display: flex; align-items: center; gap: 3px; padding: 0 4px 0 13px; }
.layer span { flex: 1; }
.dot { width: 2px; height: 2px; margin: 0 4px 0 5px; background: #fff; border-radius: 1px; }
.green { width: 7px; height: 7px; background: #4cf44c; }
.lbody { flex: 1; background: #e9e7e3; }
.lfoot { height: 13px; display: flex; align-items: center; gap: 2px; padding: 0 5px 0 3px; border-top: 1px solid #c0bcb4; }
.lfoot svg { width: 11px; height: 11px; }
.push { margin-left: auto; }
.frames { flex: 1; min-width: 0; display: flex; }
.framesmain { flex: 1; min-width: 0; border-left: 1px solid #77736b; background: #e9e7e3; display: flex; flex-direction: column; }
.ruler { overflow: hidden; }
.ruler text { font: 7px "DejaVu Sans Condensed", sans-serif; }
.ruler .cur { fill: #900; }
.status { flex: 1; display: flex; align-items: center; padding-left: 1px; background: var(--face); border-top: 1px solid #9a968e; }
.status > button { width: 10px; height: 11px; border: 1px solid #b4b0a8; margin-right: 1px; display: grid; place-items: center; }
.status > .st-center, .status > .st-onion2, .status > .st-multi { margin-right: 3px; }
.status > button svg { width: 8px; height: 8px; }
.status output { height: 12px; border: 1px solid; border-color: #8e8a82 #f4f2ee #f4f2ee #8e8a82; text-align: center; margin: 0 1px; white-space: nowrap; font-size: 7px; }
.status .n { width: 18px; margin-left: 3px; }
.status .fps { width: 31px; }
.status .sec { width: 24px; }
.hscroll { display: flex; flex: 1; height: 11px; background: #e9e7e3; }
.hscroll button, .vscroll button, .thumb { background: var(--face); border: 1px solid; border-color: #f8f6f2 #6c6860 #6c6860 #f8f6f2; display: grid; place-items: center; }
.hscroll button { width: 10px; }
.hscroll button svg, .vscroll button svg { width: 6px; height: 6px; }
.status .hscroll { margin-left: 2px; }
.short { width: 41px; }
.tlside { width: 12px; display: flex; flex-direction: column; }
.tlside .flat { height: 17px; align-items: center; border-bottom: 1px solid #9a968e; }
.vscroll { width: 12px; display: flex; flex-direction: column; background: #e9e7e3; }
.tlside .vscroll { flex: 1; }
.vscroll button { height: 11px; width: 11px; }
.vscroll .thumb { width: 11px; }
.grow { flex: 1; }
.corner { background: var(--face); min-height: 11px; }
.grab { height: 6px; display: flex; justify-content: center; border-bottom: 1px solid #55524c; }
.grab svg { width: 24px; height: 5px; }

.stagewrap { flex: 1; display: grid; grid-template-columns: 1fr 12px; grid-template-rows: 1fr 11px; padding-top: 1px; }
.stageview { background: #cfcfcf; display: flex; justify-content: center; }
.stage { width: 65%; background: #fff; position: relative; }
.textobj { position: absolute; left: 79px; top: 20px; width: 87px; height: 60px; border: 1px solid #38a4f4; font: 50px/60px "Liberation Serif", serif; text-align: center; }
.textobj svg { position: absolute; left: 39px; top: 26px; width: 8px; height: 8px; }
.space { flex: 1; }
.mid { height: 56px; }
.wide { width: 241px; }

.split { height: 6px; display: flex; justify-content: center; background: #787878; }
.split svg { width: 34px; height: 5px; }
.panel { background: var(--face); border-left: 1px solid #e8e6e2; }
.phead { height: 13px; display: flex; align-items: center; gap: 4px; padding: 0 3px; background: linear-gradient(#b8c8e4, #a0b2d2 60%, #aebedb); border-top: 1px solid #e4eaf4; }
.phead .vgrip { border-color: #8090b0; }
.tri { width: 7px; height: 7px; }
.menuic { margin-left: auto; }
.panel .phead { padding-left: 2px; }
.panel .phead:first-child { height: 14px; border-bottom: 1px solid #8c98b0; }
.tabs button { height: 12px; padding: 0 4px; align-self: flex-end; background: linear-gradient(#8490a8, #8490a8) right center / 1px 8px no-repeat; }
.panel .phead.tabs { gap: 0; }
.tabs button:last-of-type { background: none; }
.tabs .cur { background: var(--face); width: 46px; padding: 0 0 0 3px; text-align: left; clip-path: polygon(0 0, 86% 0, 100% 100%, 0 100%); }
.tabs .tri { margin: 0 4px; }
.props { display: grid; grid-template-columns: 117px 150px 1fr 14px; grid-template-rows: 42px 38px; }
.cell { min-width: 0; display: flex; flex-direction: column; gap: 5px; padding-top: 5px; }
.cell.top { border-bottom: 1px solid #9a968e; }
.cell.low { border-top: 1px solid #f0eeea; padding-top: 3px; }
.c1, .c2 { border-right: 1px solid #9a968e; }
.c1 { flex-direction: row; padding-left: 2px; gap: 12px; }
.c1.low { padding-left: 40px; }
.thumbimg { width: 26px; height: 26px; }
.stack { width: 70px; display: flex; flex-direction: column; gap: 5px; padding-top: 4px; }
.low .stack { gap: 2px; }
.fld { height: 14px; width: 100%; background: #fff; border: 1px solid; border-color: #555 #e8e6e2 #e8e6e2 #555; padding: 0 2px; }
.fld::placeholder { color: #888; text-align: center; opacity: 1; }
.fld.off { background: var(--face); color: #8a867e; border-color: #8a867e #eee #eee #8a867e; }
.row { display: flex; align-items: center; height: 14px; white-space: nowrap; }
.low .row { height: 15px; }
.low { gap: 3px; }
.lb { text-align: right; margin-right: 3px; }
.c2 .lb { width: 29px; }
.c3 .lb { width: 33px; }
.w67 { width: 67px; }
.w136 { width: 136px; }
.w98 { width: 98px; }
.w48 { width: 48px; }
.w51 { width: 52px; }
.w53 { width: 53px; margin: 0 3px 0 2px; }
.w30 { width: 30px; }
.w28 { width: 28px; }
.ck { display: flex; align-items: center; gap: 4px; }
.ck input { appearance: none; width: 9px; height: 9px; background: #fff; border: 1px solid; border-color: #555 #eee #eee #555; display: grid; place-items: center; }
.ck input:checked::after { content: ""; width: 5px; height: 3px; border: solid #000; border-width: 0 0 1px 1px; transform: rotate(-45deg); }
.sc { margin-left: 6px; }
.pop { width: 9px; height: 14px; background: #e4e1dc; border: 1px solid #b4b0a8; display: grid; place-items: center; }
.pop svg { width: 7px; height: 7px; }
.btn { width: 36px; height: 14px; background: var(--face); border: 1px solid; border-color: #f8f6f2 #555 #555 #f8f6f2; }
.edit { margin-left: 19px; border-color: #333; box-shadow: inset 1px 1px #fff, inset -1px -1px #8a867e; }
.btn.off { margin-left: 3px; color: #a09c94; }
.warn { width: 16px; height: 14px; margin-left: 4px; display: grid; place-items: center; border: 1px solid; border-color: #f4f2ee #8a867e #8a867e #f4f2ee; }
.warn svg { width: 11px; height: 11px; }
.times { width: 24px; margin: 0 3px 0 8px; }
.dim { color: #9a968e; }
.checks { padding-left: 4px; gap: 7px; }
.checks .ck { gap: 3px; }
.c4 { gap: 2px; padding-top: 3px; }
.c4 svg { width: 10px; height: 10px; }
.c4 .end { margin-top: auto; }

.gutter { width: 4px; display: flex; align-items: center; background: linear-gradient(90deg, #888, #555); }
.gutter button { width: 4px; height: 33px; background: #b8b8b8; display: grid; place-items: center; }
.gutter svg { width: 4px; height: 8px; }

.library { width: 145px; background: var(--face); display: flex; flex-direction: column; }
.librow { display: flex; align-items: center; gap: 6px; height: 22px; padding: 0 4px; }
.librow .sel { width: 102px; }
.librow svg { width: 12px; height: 12px; }
.count { height: 13px; line-height: 12px; padding-left: 3px; border-top: 1px solid #f4f2ee; }
.preview { height: 61px; background: #c0c0c0; border-top: 1px solid #555; border-right: 1px solid #eee; }
.list { flex: 1; display: flex; background: #fff; border-top: 3px solid #eceae6; }
.tablewrap { flex: 1; min-width: 0; }
table { width: 100%; table-layout: fixed; border-collapse: collapse; }
th { height: 13px; padding: 0 2px; font-weight: 400; text-align: left; background: var(--face); border-bottom: 1px solid #555; }
.nm { width: 104px; border-right: 1px solid #333; }
td { height: 12px; padding: 0 1px; white-space: nowrap; overflow: hidden; }
td:last-child { padding: 0 0 0 2px; }
td .ic { float: left; }
td .ic + span { margin-left: 6px; }
.lside { width: 11px; display: flex; flex-direction: column; }
.lside button { height: 11px; background: var(--face); border: 1px solid; border-color: #f4f2ee #777 #777 #f4f2ee; display: grid; place-items: center; }
.lside svg { width: 7px; height: 7px; }
.track { flex: 1; background: #f0eeea; }
.libfoot { height: 13px; display: flex; align-items: center; gap: 1px; padding-left: 1px; position: relative; }
.libfoot > button svg { width: 11px; height: 11px; }
.libfoot .del { margin-left: 9px; }
.tiny { width: 18px; }
.badge { position: absolute; right: 0; bottom: 0; width: 27px; height: 27px; }

.taskbar { height: 22px; display: flex; align-items: center; gap: 3px; padding: 2px 2px 0; background: var(--face); border-top: 1px solid #f4f2ee; }
.start { width: 35px; height: 16px; display: flex; align-items: center; gap: 1px; font-weight: 700; font-family: Roboto, sans-serif; border: 1px solid; border-color: #fff #555 #555 #fff; }
.start + .sep { margin-left: 4px; }
.quick { display: flex; gap: 4px; margin-left: 1px; }
.quick svg { width: 12px; height: 12px; }
.chev { font-weight: 700; }
.quick + .chev { margin: 0 1px 4px 8px; }
.tasks { display: flex; gap: 3px; flex: 1; min-width: 0; }
.tasks button { flex: 1; min-width: 0; height: 16px; display: flex; align-items: center; gap: 2px; padding: 0 2px; white-space: nowrap; overflow: hidden; border: 1px solid; border-color: #fff #555 #555 #fff; }
.tasks .ic { width: 11px; height: 11px; }
.tasks .active { font-weight: 700; background: #efede9; border-color: #555 #fff #fff #555; }
.tasks + .sep { margin-left: 6px; }
.lang { width: 10px; height: 11px; line-height: 11px; background: #0a246a; color: #fff; text-align: center; font-size: 7px; }
.find { width: 77px; height: 15px; display: flex; align-items: center; background: #fff; border: 1px solid #b4b0a8; }
.find input { flex: 1; min-width: 0; padding-left: 2px; outline: 0; }
.find input::placeholder { color: #999; opacity: 1; }
.find svg { width: 16px; height: 16px; }
.go { width: 16px; height: 15px; margin-left: -3px; background: linear-gradient(#6cc048, #2c8c1c); display: grid; place-items: center; }
.go svg { width: 10px; height: 10px; }
.tray { width: 140px; height: 16px; display: flex; align-items: center; justify-content: space-between; padding: 0 4px; border: 1px solid; border-color: #8e8a82 #fff #fff #8e8a82; }
.ati { background: #d82020; color: #fff; font: italic 700 6px/7px Roboto, sans-serif; padding: 0 1px; }
</style>
